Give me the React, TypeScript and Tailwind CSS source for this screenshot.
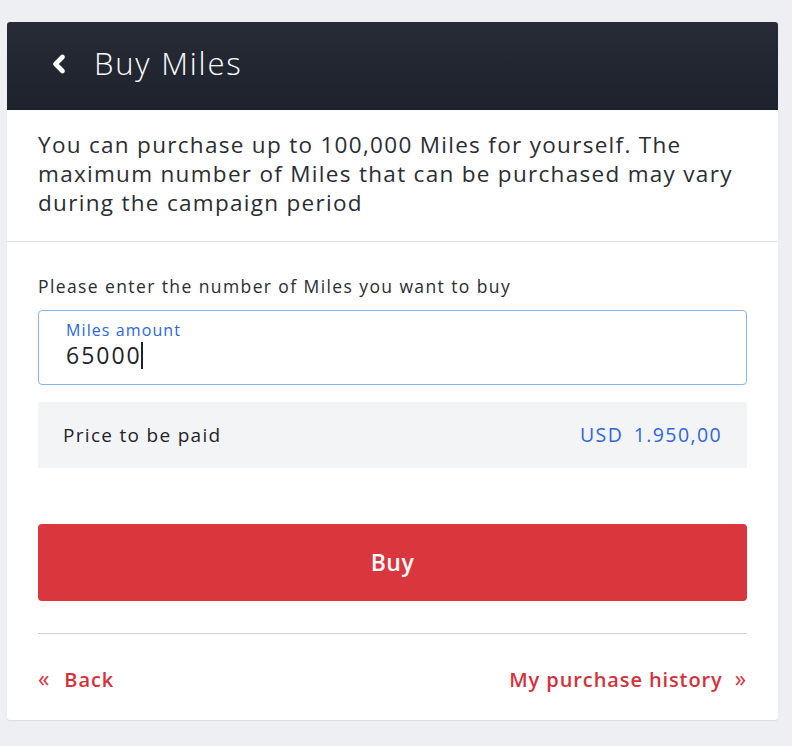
import { ChevronLeft } from "lucide-react"

export default function App() {
    return (
        <div
            className="min-h-[746px] bg-[#eeeff3] pt-[22px] pl-[7px] pr-[14px] pb-[26px]"
            style={{ fontFamily: '"Open Sans", "Noto Sans", sans-serif' }}
        >
            <div className="bg-white rounded-[3px] overflow-hidden shadow-[0_1px_1px_rgba(0,0,0,0.08)]">
                <div className="h-[88px] flex items-center pl-[38px] pb-[5px] bg-gradient-to-b from-[#262b36] to-[#1d222d]">
                    <ChevronLeft className="w-[28px] h-[28px] text-white" strokeWidth={4} />
                    <h1 className="ml-[21px] text-[31px] font-light text-white tracking-[1.8px]">
                        Buy Miles
                    </h1>
                </div>

                <p className="px-[31px] pt-[20px] pb-[24px] text-[22.5px] leading-[29px] text-[#2a2d33] tracking-[1.3px] border-b border-[#e3e4e8]">
                    You can purchase up to 100,000 Miles for yourself. The
                    maximum number of Miles that can be purchased may vary
                    during the campaign period
                </p>

                <div className="px-[31px] pt-[32px]">
                    <div className="text-[17.5px] text-[#2a2d33] leading-[24px] tracking-[1.4px]">
                        Please enter the number of Miles you want to buy
                    </div>

                    <div className="mt-[12px] h-[75px] border border-[#8ab3f3] rounded-[4px] pl-[27px] pt-[8px]">
                        <div className="text-[16px] leading-[22px] text-[#2e67dd] tracking-[1.1px]">
                            Miles amount
                        </div>
                        <div className="flex items-center text-[23px] leading-[28px] text-[#1f232b] tracking-[2px]">
                            65000
                            <span className="-ml-[1px] inline-block w-[2px] h-[27px] bg-[#1f232b]" />
                        </div>
                    </div>

                    <div className="mt-[17px] h-[66px] bg-[#f3f4f6] flex items-center justify-between pl-[25px] pr-[25px]">
                        <span className="text-[19px] text-[#1f232b] tracking-[1.3px]">Price to be paid</span>
                        <span className="text-[19.5px] text-[#2e67dd] tracking-[1.4px] [word-spacing:4px]">USD 1.950,00</span>
                    </div>

                    <button className="mt-[56px] w-full h-[77px] bg-[#d9363e] rounded-[4px] text-white text-[23px] font-semibold tracking-[0.5px]">
                        Buy
                    </button>

                    <div className="mt-[32px] border-t border-[#cfd0d3]" />

                    <div className="h-[86px] pt-[6px] flex items-center justify-between text-[#d4323b] text-[20px] font-semibold">
                        <a className="flex items-center tracking-[0.9px]">
                            <span className="text-[23px] font-normal mr-[14px] -mt-[3px]">«</span>
                            Back
                        </a>
                        <a className="flex items-center tracking-[0.9px]">
                            My purchase history
                            <span className="text-[23px] font-normal ml-[12px] -mt-[3px]">»</span>
                        </a>
                    </div>
                </div>
            </div>
        </div>
    )
}
